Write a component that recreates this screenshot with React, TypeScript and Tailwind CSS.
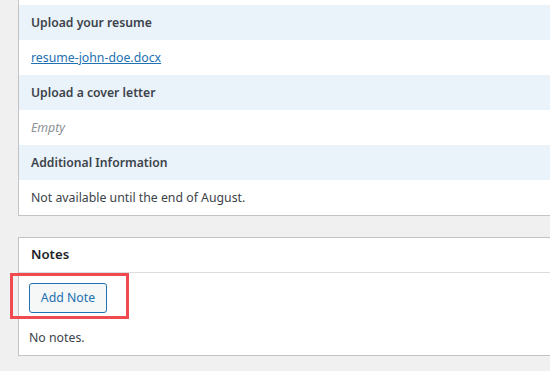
const Label = ({ children }: { children: React.ReactNode }) => (
  <div className="h-[35px] bg-[#eaf2fa] px-[12px] pt-[1px] flex items-center font-semibold text-[12.2px] text-[#3c434a]">
    {children}
  </div>
);

const Value = ({ children }: { children: React.ReactNode }) => (
  <div className="h-[35px] bg-white px-[12px] pt-[1px] flex items-center text-[12.3px] text-[#3c434a]">
    {children}
  </div>
);

export default function App() {
  return (
    <div
      className="w-[550px] h-[371px] overflow-hidden bg-[#f0f0f1]"
      style={{ fontFamily: '"Noto Sans", "Open Sans", sans-serif' }}
    >
      {/* entry fields */}
      <div className="ml-[18px] w-[600px] border border-t-0 border-[#c3c4c7] bg-white">
        <div className="h-[5px]" />
        <Label>Upload your resume</Label>
        <Value>
          <a href="#" className="text-[#2271b1] underline">
            resume-john-doe.docx
          </a>
        </Value>
        <Label>Upload a cover letter</Label>
        <Value>
          <span className="italic text-[#8c8f94]">Empty</span>
        </Value>
        <Label>Additional Information</Label>
        <Value>Not available until the end of August.</Value>
      </div>

      {/* notes */}
      <div className="ml-[18px] mt-[21px] w-[600px] border border-[#c3c4c7] bg-white">
        <div className="h-[35px] px-[12px] flex items-center border-b border-[#dcdcde] font-semibold text-[13.2px] text-[#1d2327]">
          Notes
        </div>
        <div className="px-[10px] pt-[10px] pb-[8px] text-[12.3px] text-[#3c434a]">
          <div className="relative w-fit">
            <button className="h-[30px] w-[78px] rounded-[3px] border border-[#2271b1] bg-[#f6f7f7] text-[#2271b1] text-[12.3px]">
              Add Note
            </button>
            <div className="absolute -left-[19px] -top-[10px] w-[119px] h-[46px] border-[3px] border-[#ef4a4f]" />
          </div>
          <div className="mt-[16px]">No notes.</div>
        </div>
      </div>
    </div>
  );
}
